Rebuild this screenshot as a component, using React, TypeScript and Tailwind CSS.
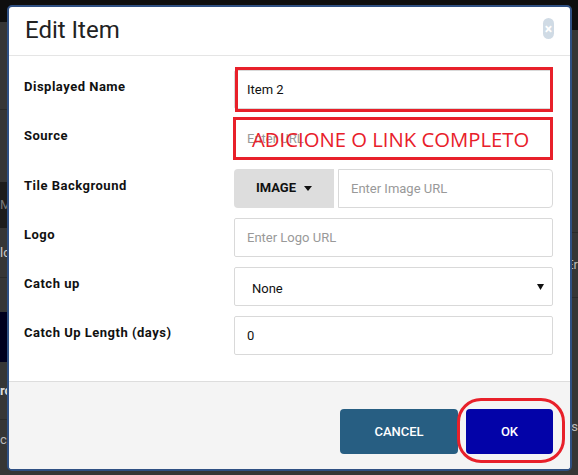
import React from 'react';

const font = { fontFamily: 'Roboto, "Liberation Sans", sans-serif' };

function Field({ label, children }: { label: string; children: React.ReactNode }) {
  return (
    <div className="flex items-start">
      <div className="w-[210px] pt-[7px] text-[13px] font-bold text-[#111] tracking-[0.5px]">{label}</div>
      <div className="relative flex-1">{children}</div>
    </div>
  );
}

const inputCls =
  'h-[39px] w-full border border-[#d9d9d9] rounded-[2px] px-[12px] text-[13px] text-[#111] placeholder:text-[#999] outline-none bg-white';

export default function App() {
  return (
    <div className="relative h-[475px] w-[578px] overflow-hidden bg-[#363636]" style={font}>
      {/* page behind the dialog */}
      <div className="flex h-full">
        <div className="flex w-[290px] flex-col text-[13px] text-[#aaa]">
          <div className="h-[22px] bg-[#0e0e0e]" />
          <div className="h-[88px] border-b border-[#2a2a2a]" />
          <div className="h-[72px]" />
          <div className="flex h-[46px] items-center bg-[#1d1d1d] text-[#777]">M</div>
          <div className="flex h-[50px] items-center border-b border-[#2a2a2a] text-[#ccc]">lc</div>
          <div className="h-[34px]" />
          <div className="h-[50px] bg-[#00001e]" />
          <div className="flex h-[58px] items-center border-b border-[#2a2a2a] font-bold text-[#ddd]">ro</div>
          <div className="flex h-[40px] items-center text-[#bbb]">c/</div>
        </div>
        <div className="flex flex-1 flex-col text-[13px] text-[#bbb]">
          <div className="h-[30px] bg-[#0e0e0e]" />
          <div className="h-[203px] border-b border-[#2a2a2a]" />
          <div className="flex h-[65px] items-center justify-end border-b border-[#2a2a2a]">Er</div>
          <div className="flex h-[140px] items-end justify-end pb-[2px]">s</div>
        </div>
      </div>

      {/* dialog */}
      <div className="absolute left-[7px] top-[5px] flex h-[466px] w-[565px] flex-col overflow-hidden rounded-[5px] border-2 border-[#2f5083] bg-white">
        <div className="flex h-[49px] shrink-0 items-start justify-between border-b border-[#e5e5e5] pl-[16px] pr-[16px]">
          <h1 className="pt-[9px] text-[24px] leading-[28px] text-[#222]">Edit Item</h1>
          <div className="mt-[11px] flex h-[21px] w-[11px] items-center justify-center rounded-full bg-[#d0dbe5] text-[14px] font-bold leading-none text-white">
            ×
          </div>
        </div>

        <div className="flex flex-1 flex-col gap-[10.3px] pl-[15px] pr-[17px] pt-[14px]">
          <Field label="Displayed Name">
            <input className={inputCls} defaultValue="Item 2" />
            <div className="pointer-events-none absolute -bottom-[3px] -top-[3px] left-[1px] right-0 border-[3px] border-[#e8202a]" />
          </Field>
          <Field label="Source">
            <input className={inputCls} placeholder="Enter URL" />
            <div
              className="pointer-events-none absolute -bottom-[2px] -left-[1px] -top-[2px] right-0 flex items-center border-[3px] border-[#e8202a] pl-[16px] text-[20.3px] text-[#e8202a]"
              style={{ fontFamily: '"Open Sans", sans-serif' }}
            >
              ADICIONE O LINK COMPLETO
            </div>
          </Field>
          <Field label="Tile Background">
            <div className="flex h-[39px] gap-[4px]">
              <div className="flex w-[100px] items-center justify-center gap-[8px] rounded-l-[4px] bg-[#dddddd] text-[13px] font-bold text-[#111]">
                IMAGE
                <svg width="8" height="5" viewBox="0 0 8 5">
                  <path d="M0 0h8L4 5z" fill="#111" />
                </svg>
              </div>
              <input
                className="h-[39px] flex-1 rounded-r-[4px] border border-[#d9d9d9] px-[12px] text-[13px] placeholder:text-[#999] outline-none"
                placeholder="Enter Image URL"
              />
            </div>
          </Field>
          <Field label="Logo">
            <input className={inputCls} placeholder="Enter Logo URL" />
          </Field>
          <Field label="Catch up">
            <div className="flex h-[39px] w-full items-center justify-between border border-[#d9d9d9] rounded-[2px] pl-[17px] pr-[8px] text-[13px] text-[#111]">
              <span className="pt-[4px]">None</span>
              <svg width="7" height="7" viewBox="0 0 7 7">
                <path d="M0 1h7L3.5 7z" fill="#111" />
              </svg>
            </div>
          </Field>
          <Field label="Catch Up Length (days)">
            <input className={inputCls} defaultValue="0" />
          </Field>
        </div>

        <div className="relative flex h-[88px] shrink-0 items-start justify-end gap-[8px] border-t border-[#dddddd] bg-[#f4f4f4] pr-[17px] pt-[27px]">
          <button className="block h-[45px] w-[118px] rounded-[4px] bg-[#275e82] text-[13px] font-medium text-white">CANCEL</button>
          <div className="relative h-[45px]">
            <button className="block h-[45px] w-[87px] rounded-[4px] bg-[#0303a8] text-[13px] font-medium text-white">OK</button>
            <div className="pointer-events-none absolute -bottom-[9px] -left-[9px] -right-[12px] -top-[11px] rounded-[24px] border-[3px] border-[#e8202a]" />
          </div>
        </div>
      </div>
    </div>
  );
}
